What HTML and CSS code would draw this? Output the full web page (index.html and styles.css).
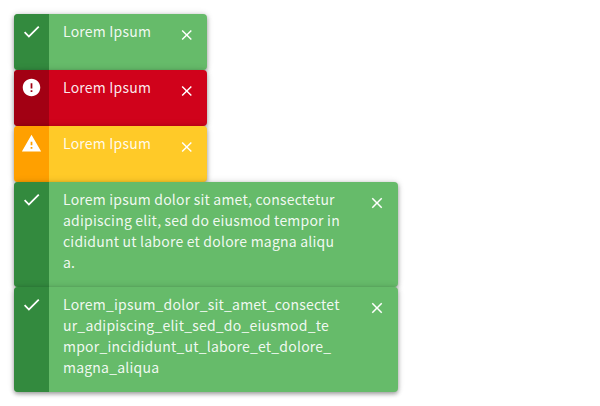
FILE: index.html
```html
<!DOCTYPE html>
<html lang="en">
<head>
<meta charset="utf-8">
<title>Notifications</title>
<link rel="stylesheet" href="styles.css">
</head>
<body>
<svg width="0" height="0" class="defs">
  <symbol id="check" viewBox="0 0 24 24"><path d="M9 16.17L4.83 12l-1.42 1.41L9 19 21 7l-1.41-1.41z"/></symbol>
  <symbol id="error" viewBox="0 0 24 24"><path d="M12 2C6.48 2 2 6.48 2 12s4.48 10 10 10 10-4.48 10-10S17.52 2 12 2zm1 15h-2v-2h2v2zm0-4h-2V7h2v6z"/></symbol>
  <symbol id="warning" viewBox="0 0 24 24"><path d="M1 21h22L12 2 1 21zm12-3h-2v-2h2v2zm0-4h-2v-4h2v4z"/></symbol>
  <symbol id="close" viewBox="0 0 24 24"><path d="M19 6.41L17.59 5 12 10.59 6.41 5 5 6.41 10.59 12 5 17.59 6.41 19 12 13.41 17.59 19 19 17.59 13.41 12z"/></symbol>
</svg>
<main class="stack">
  <div class="toast success">
    <div class="status"><svg class="icon"><use href="#check"/></svg></div>
    <div class="message">Lorem Ipsum</div>
    <div class="dismiss"><svg class="close"><use href="#close"/></svg></div>
  </div>
  <div class="toast error">
    <div class="status"><svg class="icon"><use href="#error"/></svg></div>
    <div class="message">Lorem Ipsum</div>
    <div class="dismiss"><svg class="close"><use href="#close"/></svg></div>
  </div>
  <div class="toast warning">
    <div class="status"><svg class="icon"><use href="#warning"/></svg></div>
    <div class="message">Lorem Ipsum</div>
    <div class="dismiss"><svg class="close"><use href="#close"/></svg></div>
  </div>
  <div class="toast wide success">
    <div class="status"><svg class="icon"><use href="#check"/></svg></div>
    <div class="message">Lorem ipsum dolor sit amet, consectetur<br>adipiscing elit, sed do eiusmod tempor in<br>cididunt ut labore et dolore magna aliqu<br>a.</div>
    <div class="dismiss"><svg class="close"><use href="#close"/></svg></div>
  </div>
  <div class="toast wide success">
    <div class="status"><svg class="icon"><use href="#check"/></svg></div>
    <div class="message">Lorem_ipsum_dolor_sit_amet_consectet<br>ur_adipiscing_elit_sed_do_eiusmod_te<br>mpor_incididunt_ut_labore_et_dolore_<br>magna_aliqua</div>
    <div class="dismiss"><svg class="close"><use href="#close"/></svg></div>
  </div>
</main>
</body>
</html>
```
FILE: styles.css
```css
* { box-sizing: border-box; }
body {
  margin: 0;
  background: #fff;
  font-family: "Noto Sans CJK JP", sans-serif;
  font-size: 14px;
  line-height: 21px;
  letter-spacing: 0.21px;
}
.defs { position: absolute; }
.stack {
  display: flex;
  flex-direction: column;
  align-items: flex-start;
  padding: 14px;
}
.toast {
  display: flex;
  width: 193px;
  min-height: 56px;
  border-radius: 4px;
  color: rgba(255, 255, 255, 0.92);
  box-shadow: 0 2px 4px rgba(0, 0, 0, 0.34), 0 0 7px rgba(0, 0, 0, 0.14);
}
.wide { width: 384px; }
.status {
  flex: 0 0 35px;
  padding: 7px;
  border-radius: 4px 0 0 4px;
}
.icon {
  display: block;
  width: 21px;
  height: 21px;
  fill: #fff;
}
.message {
  flex: 1;
  min-width: 0;
  padding: 7px 0 14px 14px;
  white-space: nowrap;
}
.dismiss {
  flex: 0 0 42px;
  padding: 12px;
}
.toast:not(.wide) .dismiss { padding: 12px 11px 12px 13px; }
.close {
  display: block;
  width: 18px;
  height: 18px;
  fill: #fff;
}
.toast:not(.wide) .close { padding-right: 0.5px; }
.success { background: #66bb6a; }
.success .status { background: #338a3e; }
.error { background: #d0021b; }
.error .status { background: #a20013; }
.warning { background: #ffca28; }
.warning .status { background: #ffa000; }
```
